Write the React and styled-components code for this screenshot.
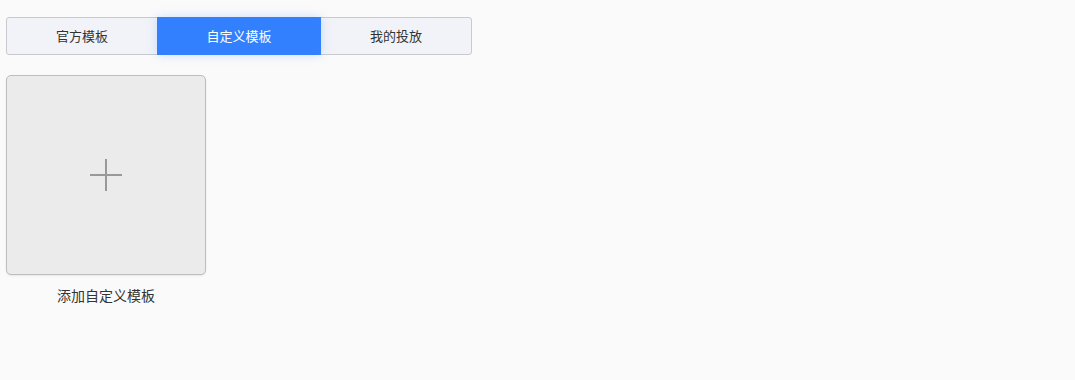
import React, { useState } from "react";
import styled, { createGlobalStyle } from "styled-components";

const GlobalStyle = createGlobalStyle`
  html, body {
    margin: 0;
    padding: 0;
    background: #fafafa;
    font-family: "Noto Sans CJK SC", "Noto Sans", sans-serif;
  }
`;

const tabs = [
  { id: "official", label: "官方模板", width: 150 },
  { id: "custom", label: "自定义模板", width: 164 },
  { id: "mine", label: "我的投放", width: 150 },
];

const App = () => {
  const [active, setActive] = useState("custom");

  return (
    <>
      <GlobalStyle />
      <Page>
        <TabBar>
          {tabs.map((tab) => (
            <Tab
              key={tab.id}
              $width={tab.width}
              $active={tab.id === active}
              onClick={() => setActive(tab.id)}
            >
              {tab.label}
            </Tab>
          ))}
        </TabBar>
        <Grid>
          <Item>
            <AddCard>
              <svg width="34" height="34" viewBox="0 0 34 34">
                <path d="M17 1v32M1 17h32" stroke="#999" strokeWidth="2" fill="none" />
              </svg>
            </AddCard>
            <ItemLabel>添加自定义模板</ItemLabel>
          </Item>
        </Grid>
      </Page>
    </>
  );
};

export default App;

const Page = styled.div`
  padding: 17px 6px;
`;

const TabBar = styled.div`
  display: inline-flex;
  height: 36px;
  border: 1px solid #c9cacf;
  border-radius: 3px;
  background: #f2f3f8;
`;

const Tab = styled.div`
  width: ${(p) => p.$width}px;
  display: flex;
  align-items: center;
  justify-content: center;
  padding-bottom: 2px;
  box-sizing: border-box;
  font-size: 13px;
  cursor: pointer;
  color: ${(p) => (p.$active ? "#fff" : "#333")};
  background: ${(p) => (p.$active ? "#3380ff" : "transparent")};
  margin: ${(p) => (p.$active ? "-1px 0" : "0")};
  box-shadow: ${(p) => (p.$active ? "0 0 10px rgba(51, 128, 255, 0.22)" : "none")};
  position: relative;
`;

const Grid = styled.div`
  display: flex;
  gap: 20px;
  margin-top: 20px;
`;

const Item = styled.div`
  display: flex;
  flex-direction: column;
  align-items: center;
  width: 200px;
`;

const AddCard = styled.div`
  width: 198px;
  height: 198px;
  border: 1px solid #bdbdbd;
  border-radius: 5px;
  background: #ebebeb;
  box-shadow: 0 1px 2px rgba(0, 0, 0, 0.08);
  display: flex;
  align-items: center;
  justify-content: center;
  cursor: pointer;
`;

const ItemLabel = styled.div`
  margin-top: 10px;
  font-size: 14px;
  color: #333;
`;
